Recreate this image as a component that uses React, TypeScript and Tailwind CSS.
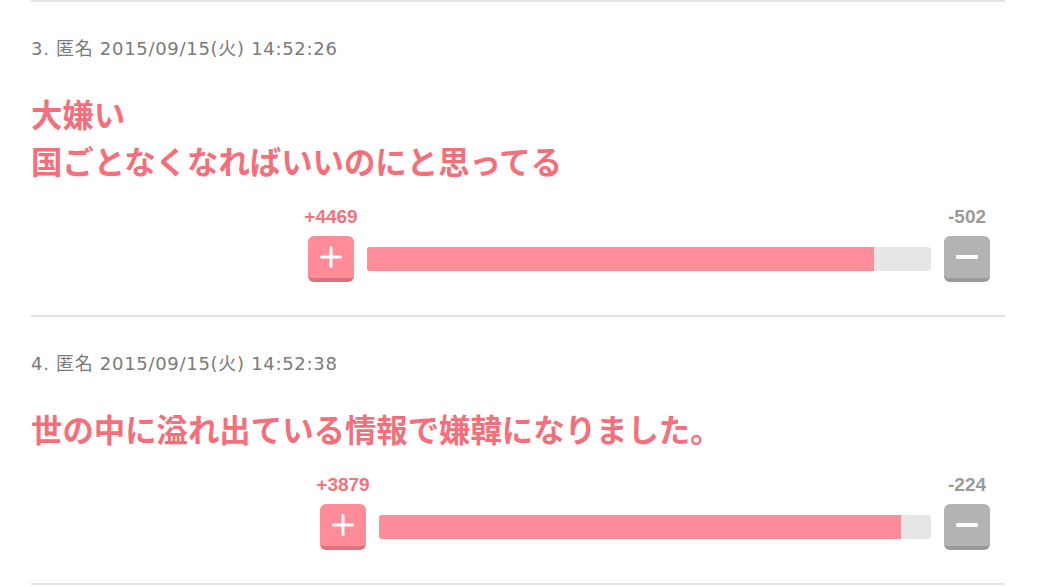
const comments = [
  {
    no: 3,
    date: "2015/09/15(火) 14:52:26",
    lines: ["大嫌い", "国ごとなくなればいいのにと思ってる"],
    plus: 4469,
    minus: 502,
    voteWidth: "w-[682px]",
  },
  {
    no: 4,
    date: "2015/09/15(火) 14:52:38",
    lines: ["世の中に溢れ出ている情報で嫌韓になりました。"],
    plus: 3879,
    minus: 224,
    voteWidth: "w-[670px]",
  },
];

function VoteBar({ plus, minus, width }: { plus: number; minus: number; width: string }) {
  const ratio = (plus / (plus + minus)) * 100;
  return (
    <div className={`${width} ml-auto mr-[15px]`}>
      {/* counts */}
      <div className="flex justify-between font-['Liberation_Sans',Arial,sans-serif] text-[19px] font-bold leading-[22px]">
        <div className="flex w-[46px] justify-center whitespace-nowrap text-[#f3737d]">+{plus}</div>
        <div className="flex w-[46px] justify-center whitespace-nowrap text-[#9a9a9a]">-{minus}</div>
      </div>
      <div className="mt-[8px] flex items-center gap-[13px]">
        <button className="flex h-[46px] w-[46px] shrink-0 items-center justify-center rounded-[6px] border-b-4 border-[#e0707b] bg-[#ff8c97]">
          <svg width="22" height="22" viewBox="0 0 22 22">
            <path d="M11 1.5v19M1.5 11h19" stroke="white" strokeWidth="3" strokeLinecap="round" />
          </svg>
        </button>
        <div className="h-[24px] flex-1 overflow-hidden rounded-[3px] bg-[#e6e6e6]">
          <div className="h-full bg-[#ff8c99]" style={{ width: `${ratio}%` }} />
        </div>
        <button className="flex h-[46px] w-[46px] shrink-0 items-center justify-center rounded-[6px] border-b-4 border-[#999999] bg-[#b3b3b3]">
          <span className="block h-[4px] w-[22px] rounded-[1px] bg-white" />
        </button>
      </div>
    </div>
  );
}

export default function App() {
  return (
    <main className="min-h-screen bg-white">
      <div className="mx-[31px] w-[974px] border-t-2 border-[#e3e3e3]">
        {comments.map((c) => (
          <div key={c.no} className="border-b-2 border-[#e3e3e3] pb-[33px] pt-[35px]">
            <div className="font-['DejaVu_Sans','Noto_Sans_CJK_JP',sans-serif] text-[18px] leading-[24px] tracking-[0.7px] text-[#7a7a7a]">
              {c.no}. 匿名 {c.date}
            </div>
            <div className="mt-[29px] font-['Noto_Sans_CJK_JP',sans-serif] text-[31.4px] font-bold leading-[47px] text-[#f56f7b]">
              {c.lines.map((l) => (
                <div key={l}>{l}</div>
              ))}
            </div>
            <div className="mt-[22px]">
              <VoteBar plus={c.plus} minus={c.minus} width={c.voteWidth} />
            </div>
          </div>
        ))}
      </div>
    </main>
  );
}
